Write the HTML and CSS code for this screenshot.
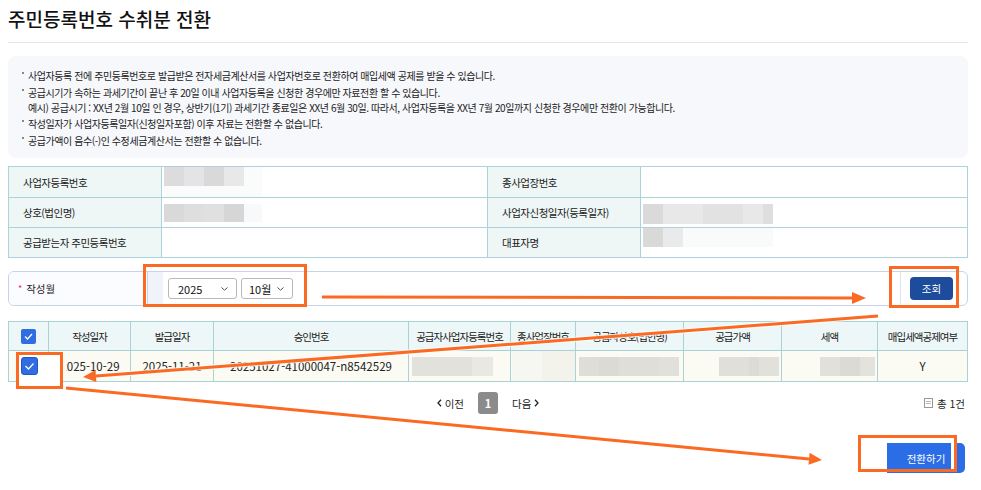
FILE: index.html
```html
<!DOCTYPE html>
<html lang="ko">
<head>
    <meta charset="UTF-8">
    <title>주민등록번호 수취분 전환</title>
    <link rel="stylesheet" href="styles.css">
</head>
<body>
    <div class="page">
        <h1 class="title">주민등록번호 수취분 전환</h1>

        <ul class="notice">
            <li>사업자등록 전에 주민등록번호로 발급받은 전자세금계산서를 사업자번호로 전환하여 매입세액 공제를 받을 수 있습니다.</li>
            <li>공급시기가 속하는 과세기간이 끝난 후 20일 이내 사업자등록을 신청한 경우에만 자료전환 할 수 있습니다.<br>예시) 공급시기 : XX년 2월 10일 인 경우, 상반기(1기) 과세기간 종료일은 XX년 6월 30일. 따라서, 사업자등록을 XX년 7월 20일까지 신청한 경우에만 전환이 가능합니다.</li>
            <li>작성일자가 사업자등록일자(신청일자포함) 이후 자료는 전환할 수 없습니다.</li>
            <li>공급가액이 음수(-)인 수정세금계산서는 전환할 수 없습니다.</li>
        </ul>

        <table class="info">
            <colgroup>
                <col style="width:153px"><col style="width:326px"><col style="width:153px"><col>
            </colgroup>
            <tr>
                <th>사업자등록번호</th>
                <td class="top"><span class="blur b1"></span></td>
                <th>종사업장번호</th>
                <td></td>
            </tr>
            <tr>
                <th>상호(법인명)</th>
                <td><span class="blur b2"></span></td>
                <th>사업자신청일자(등록일자)</th>
                <td class="bottom"><span class="blur b3"></span></td>
            </tr>
            <tr>
                <th>공급받는자 주민등록번호</th>
                <td></td>
                <th>대표자명</th>
                <td class="top"><span class="blur b4"></span></td>
            </tr>
        </table>

        <div class="search">
            <div class="search-label"><span class="req">*</span> 작성월</div>
            <div class="search-field">
                <div class="select s-year">2025
                    <svg class="chev" width="7" height="4" viewBox="0 0 7 4"><path d="M0.5 0.5 L3.5 3.2 L6.5 0.5" fill="none" stroke="#555" stroke-width="1"/></svg>
                </div>
                <div class="select s-month">10월
                    <svg class="chev" width="7" height="4" viewBox="0 0 7 4"><path d="M0.5 0.5 L3.5 3.2 L6.5 0.5" fill="none" stroke="#555" stroke-width="1"/></svg>
                </div>
            </div>
            <div class="search-btn">
                <button class="btn-search">조회</button>
            </div>
        </div>

        <table class="grid">
            <colgroup>
                <col style="width:40px"><col style="width:82px"><col style="width:83px"><col style="width:195px"><col style="width:102px">
                <col style="width:65px"><col style="width:108px"><col style="width:98px"><col style="width:96px"><col style="width:90px">
            </colgroup>
            <thead>
                <tr>
                    <th><span class="check"></span></th>
                    <th>작성일자</th>
                    <th>발급일자</th>
                    <th>승인번호</th>
                    <th>공급자사업자등록번호</th>
                    <th>종사업장번호</th>
                    <th>공급자상호(법인명)</th>
                    <th>공급가액</th>
                    <th>세액</th>
                    <th>매입세액공제여부</th>
                </tr>
            </thead>
            <tbody>
                <tr>
                    <td><span class="check"></span></td>
                    <td class="shift">2025-10-29</td>
                    <td>2025-11-21</td>
                    <td>20251027-41000047-n8542529</td>
                    <td class="left"><span class="blur g1"></span></td>
                    <td><span class="blur g2"></span></td>
                    <td class="left"><span class="blur g3"></span></td>
                    <td class="right"><span class="blur g4"></span></td>
                    <td class="right"><span class="blur g5"></span></td>
                    <td>Y</td>
                </tr>
            </tbody>
        </table>

        <div class="pager">
            <div class="pages">
                <a class="nav">
                    <svg width="5" height="8" viewBox="0 0 5 8"><path d="M4 0.8 L1 4 L4 7.2" fill="none" stroke="#222" stroke-width="1.3"/></svg>
                    이전
                </a>
                <span class="current">1</span>
                <a class="nav">
                    다음
                    <svg width="5" height="8" viewBox="0 0 5 8"><path d="M1 0.8 L4 4 L1 7.2" fill="none" stroke="#222" stroke-width="1.3"/></svg>
                </a>
            </div>
            <div class="total">
                <svg width="9" height="10" viewBox="0 0 9 10"><rect x="0.5" y="0.5" width="8" height="9" fill="#fff" stroke="#999"/><path d="M2 3.5 H7 M2 5.5 H7" stroke="#bbb"/></svg>
                총 1건
            </div>
        </div>

        <div class="actions">
            <button class="btn-convert">전환하기</button>
        </div>
    </div>

    <!-- annotation marks drawn over the capture -->
    <svg class="marks" width="981" height="490" viewBox="0 0 981 490">
        <g fill="none" stroke="#fa6a22" stroke-width="3">
            <rect x="144.5" y="265.5" width="161" height="40"/>
            <rect x="890.5" y="267.5" width="67" height="39"/>
            <rect x="859.5" y="436.5" width="96" height="34"/>
        </g>
        <rect x="951" y="438" width="3" height="31" fill="#fff"/>
        <rect x="63" y="356" width="3.5" height="20" fill="#fbfbf4"/>
        <rect x="17.5" y="353.5" width="44" height="34" fill="#fff" stroke="#fa6a22" stroke-width="3"/>
        <rect x="21.5" y="357.5" width="16" height="17" rx="2.5" fill="#2f6de1" stroke="#1f57c4"/>
        <path d="M25.5 366 L28.5 369 L33.5 363.5" fill="none" stroke="#fff" stroke-width="1.3"/>

        <g stroke="#fff" stroke-width="5" opacity="0.8">
            <line x1="322" y1="297" x2="853" y2="298"/>
            <line x1="878" y1="316" x2="96" y2="376"/>
            <line x1="66" y1="388" x2="809" y2="459"/>
        </g>
        <g stroke="#fa6a22" stroke-width="3">
            <line x1="322" y1="297" x2="853" y2="298"/>
            <line x1="878" y1="316" x2="96" y2="376"/>
            <line x1="66" y1="388" x2="809" y2="459"/>
        </g>
        <g fill="#fa6a22">
            <polygon points="866,298 852,292 852,304"/>
            <polygon points="83,377 96.4,382 95.5,370"/>
            <polygon points="822,460 808.5,464.7 809.6,452.8"/>
        </g>
    </svg>
</body>
</html>
```

FILE: styles.css
```css
* {
    box-sizing: border-box;
}
body {
    margin: 0;
    background: #ffffff;
    color: #222222;
    font-family: "Noto Sans CJK KR", "Noto Sans", sans-serif;
}
.page {
    width: 960px;
    margin-left: 8px;
}
.title {
    margin: 0;
    height: 43px;
    padding-top: 6px;
    font-size: 19px;
    line-height: 26px;
    font-weight: 500;
    color: #111111;
    border-bottom: 1px solid #e5e5e5;
}
/* notice box */
.notice {
    list-style: none;
    margin: 13px 0 0;
    height: 102px;
    padding: 12px 14px 0;
    background: #f7f8fc;
    border-radius: 8px;
}
.notice li {
    position: relative;
    padding-left: 6px;
    margin-bottom: 1.5px;
    font-size: 10px;
    line-height: 15px;
    letter-spacing: -0.43px;
    color: #222222;
}
.notice li::before {
    content: "";
    position: absolute;
    left: 0;
    top: 4px;
    width: 2px;
    height: 2px;
    background: #888888;
}
/* basic info table */
.info {
    width: 960px;
    margin-top: 8px;
    border-collapse: collapse;
    table-layout: fixed;
    font-size: 10.5px;
}
.info tr {
    height: 30px;
}
.info th,
.info td {
    border: 1px solid #acd4d8;
    padding: 0 0 0 2px;
    text-align: left;
}
.info th {
    background: #eef7f6;
    font-weight: 400;
    padding-left: 14px;
    letter-spacing: -0.5px;
    color: #222222;
}
.info td.top {
    vertical-align: top;
}
.info td.bottom {
    vertical-align: bottom;
    padding-bottom: 3px;
}
.blur {
    display: inline-block;
    vertical-align: middle;
}
.b1 {
    width: 98px;
    height: 30px;
    background:
        linear-gradient(90deg, #dcdcde 0 20px, #e4e4e6 20px 40px, #d9d9d9 40px 60px, #e8e8e8 60px 80px, transparent 80px) top left / 98px 19px no-repeat,
        #fafbfb;
}
.b2 {
    width: 98px;
    height: 18px;
    background: linear-gradient(90deg, #d9d9d9 0 20px, #dedede 20px 40px, #e0e0e0 40px 60px, #d6d6d6 60px 80px, #f8f9fb 80px);
}
.b3 {
    width: 130px;
    height: 20px;
    background: linear-gradient(90deg, #dadada 0 20px, #e8e8e8 20px 60px, #e2e2e2 60px 100px, #e8e8e8 100px 120px, #dedede 120px 130px);
}
.b4 {
    width: 130px;
    height: 19px;
    background: linear-gradient(90deg, #d9dad8 0 20px, #e9eaec 20px 40px, #f9fafa 40px);
}
/* search row */
.search {
    display: flex;
    margin-top: 13px;
    height: 35px;
    border: 1px solid #c6d3ea;
    border-radius: 6px;
    overflow: hidden;
}
.search-label {
    width: 139px;
    padding-left: 9px;
    display: flex;
    align-items: center;
    font-size: 10.5px;
    background: #fbfcff;
    border-right: 1px solid #c6d3ea;
}
.req {
    color: #e2336b;
    margin-right: 4px;
    font-size: 9px;
}
.search-field {
    flex: 1;
    display: flex;
    align-items: center;
    gap: 4px;
    padding-left: 5px;
    border-left: 15px solid #f1f3fa;
}
.select {
    height: 21px;
    border: 1px solid #b9b9b9;
    border-radius: 3px;
    display: flex;
    align-items: center;
    justify-content: space-between;
    padding: 0 8px 0 9px;
    font-size: 11px;
    color: #111111;
}
.s-year {
    width: 69px;
}
.s-month {
    width: 52px;
    padding-left: 7px;
}
.search-btn {
    width: 67px;
    display: flex;
    align-items: center;
    padding-left: 9px;
    border-left: 1px solid #dfe4ef;
}
.btn-search {
    width: 43px;
    height: 23px;
    border: 0;
    border-radius: 4px;
    background: #1d4c9d;
    color: #ffffff;
    font-family: inherit;
    font-size: 10.5px;
}
/* list grid */
.grid {
    width: 959px;
    margin-top: 15px;
    border-collapse: collapse;
    table-layout: fixed;
    font-size: 10.5px;
}
.grid th,
.grid td {
    border: 1px solid #a9d2d6;
    text-align: center;
    padding: 0;
    white-space: nowrap;
    overflow: hidden;
}
.grid th {
    height: 29px;
    background: #eef7f7;
    font-weight: 400;
    color: #222222;
    letter-spacing: -1px;
}
.grid td {
    height: 30px;
    background: #fbfbf4;
    color: #222222;
    font-size: 11.5px;
}
.grid td.shift {
    padding-left: 1px;
}
.grid td.left {
    text-align: left;
    padding-left: 3px;
}
.grid td.right {
    text-align: right;
    padding-right: 2px;
}
.check {
    display: inline-block;
    vertical-align: middle;
    width: 15px;
    height: 15px;
    border-radius: 2px;
    background: #2f6de1 url("data:image/svg+xml,%3Csvg xmlns='http://www.w3.org/2000/svg' width='15' height='15'%3E%3Cpath d='M4 7.5 L6.5 10 L11 5' fill='none' stroke='white' stroke-width='1.3'/%3E%3C/svg%3E") center no-repeat;
}
.g1 {
    width: 81px;
    height: 19px;
    background: linear-gradient(90deg, #e3e1dc 0 60px, #e9e8e3 60px);
}
.g2 {
    width: 63px;
    height: 30px;
    background: linear-gradient(90deg, #f7f7f1 0 30px, #f3f3ec 30px);
}
.g3 {
    width: 100px;
    height: 19px;
    background: linear-gradient(90deg, #dfddd8 0 20px, #dcdad4 20px 40px, #dfded9 40px 80px, #e1e0db 80px);
}
.g4 {
    width: 60px;
    height: 19px;
    background: linear-gradient(90deg, #e0dfda 0 30px, #dddbd6 30px 40px, #e1e0db 40px);
}
.g5 {
    width: 55px;
    height: 19px;
    background: linear-gradient(90deg, #e1e0db 0 20px, #dcdad4 20px 40px, #e3e2dd 40px);
}
/* pagination */
.pager {
    position: relative;
    margin-top: 10px;
    height: 22px;
    display: flex;
    justify-content: center;
    align-items: center;
}
.pages {
    display: flex;
    align-items: center;
    gap: 14px;
    font-size: 10.5px;
}
.nav {
    display: flex;
    align-items: center;
    gap: 3px;
    color: #222222;
}
.current {
    width: 20px;
    height: 22px;
    border-radius: 3px;
    background: #8b8b8b;
    color: #ffffff;
    font-size: 11px;
    font-weight: 700;
    display: flex;
    align-items: center;
    justify-content: center;
}
.total {
    position: absolute;
    right: 3px;
    top: 0;
    height: 22px;
    display: flex;
    align-items: center;
    gap: 4px;
    font-size: 10.5px;
}
/* bottom action */
.actions {
    margin-top: 29px;
    display: flex;
    justify-content: flex-end;
    padding-right: 3px;
}
.btn-convert {
    width: 78px;
    height: 30px;
    border: 0;
    border-radius: 0 5px 5px 0;
    background: #2a6de6;
    color: #ffffff;
    font-family: inherit;
    font-size: 10.5px;
}
/* annotation overlay */
.marks {
    position: absolute;
    left: 0;
    top: 0;
    pointer-events: none;
}
```
